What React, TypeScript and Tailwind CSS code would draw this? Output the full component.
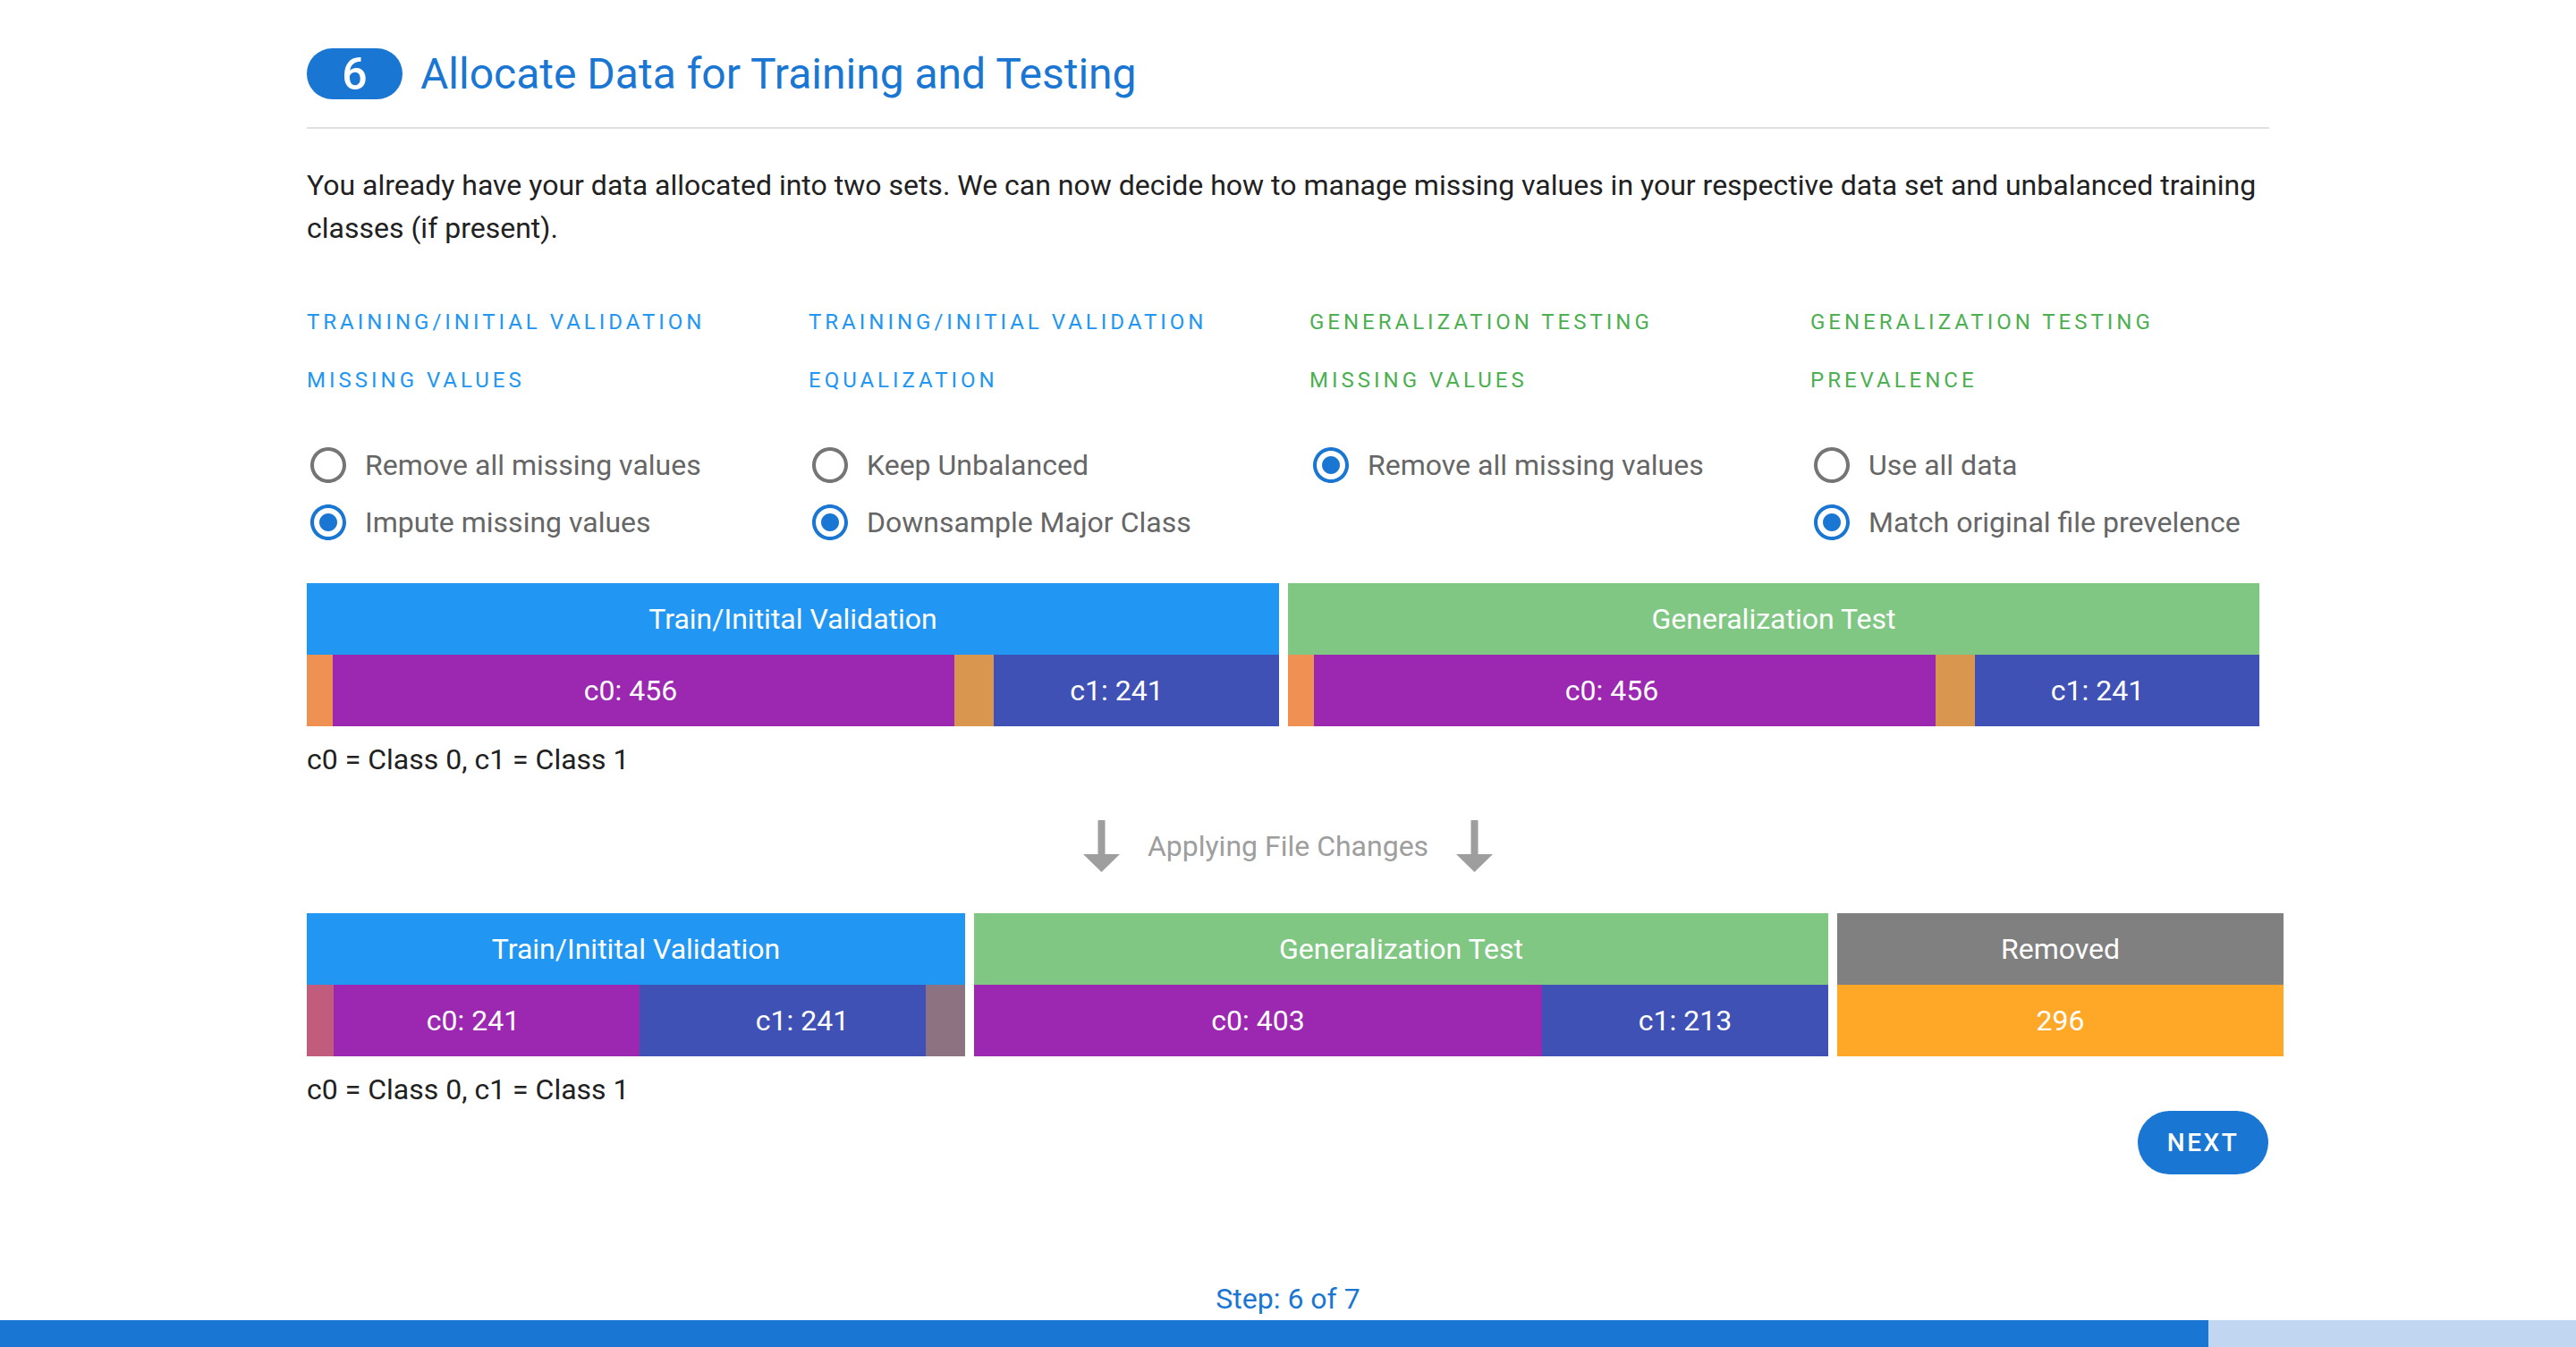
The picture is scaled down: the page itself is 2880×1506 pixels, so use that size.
import React from 'react';

type Part = { w: number; cls: string };
type Seg = { label: string; parts: Part[] };
type Block = { title: string; head: string; segs: Seg[] };

const before: Block[] = [
  {
    title: 'Train/Initital Validation',
    head: 'bg-[#2196f3]',
    segs: [
      { label: 'c0: 456', parts: [{ w: 29, cls: 'bg-[#ee9152]' }, { w: 695, cls: 'bg-[#9c27b0]' }] },
      { label: 'c1: 241', parts: [{ w: 44, cls: 'bg-[#d8964f]' }, { w: 319, cls: 'bg-[#3f51b5]' }] },
    ],
  },
  {
    title: 'Generalization Test',
    head: 'bg-[#81c784]',
    segs: [
      { label: 'c0: 456', parts: [{ w: 29, cls: 'bg-[#ee9152]' }, { w: 695, cls: 'bg-[#9c27b0]' }] },
      { label: 'c1: 241', parts: [{ w: 44, cls: 'bg-[#d8964f]' }, { w: 318, cls: 'bg-[#3f51b5]' }] },
    ],
  },
];

const after: Block[] = [
  {
    title: 'Train/Initital Validation',
    head: 'bg-[#2196f3]',
    segs: [
      { label: 'c0: 241', parts: [{ w: 30, cls: 'bg-[#c25c7c]' }, { w: 342, cls: 'bg-[#9c27b0]' }] },
      { label: 'c1: 241', parts: [{ w: 320, cls: 'bg-[#3f51b5]' }, { w: 44, cls: 'bg-[#8d7381]' }] },
    ],
  },
  {
    title: 'Generalization Test',
    head: 'bg-[#81c784]',
    segs: [
      { label: 'c0: 403', parts: [{ w: 635, cls: 'bg-[#9c27b0]' }] },
      { label: 'c1: 213', parts: [{ w: 320, cls: 'bg-[#3f51b5]' }] },
    ],
  },
  {
    title: 'Removed',
    head: 'bg-[#808080]',
    segs: [{ label: '296', parts: [{ w: 499, cls: 'bg-[#ffa726]' }] }],
  },
];

const columns = [
  {
    tone: 'text-[#2196f3]',
    lines: ['Training/Initial Validation', 'Missing Values'],
    options: [
      { label: 'Remove all missing values', checked: false },
      { label: 'Impute missing values', checked: true },
    ],
  },
  {
    tone: 'text-[#2196f3]',
    lines: ['Training/Initial Validation', 'Equalization'],
    options: [
      { label: 'Keep Unbalanced', checked: false },
      { label: 'Downsample Major Class', checked: true },
    ],
  },
  {
    tone: 'text-[#4caf50]',
    lines: ['Generalization Testing', 'Missing Values'],
    options: [{ label: 'Remove all missing values', checked: true }],
  },
  {
    tone: 'text-[#4caf50]',
    lines: ['Generalization Testing', 'Prevalence'],
    options: [
      { label: 'Use all data', checked: false },
      { label: 'Match original file prevelence', checked: true },
    ],
  },
];

function RadioIcon({ checked }: { checked: boolean }) {
  return (
    <svg
      viewBox="0 0 24 24"
      className={`w-[48px] h-[48px] shrink-0 ${checked ? 'text-[#1976d2]' : 'text-[#757575]'}`}
      fill="currentColor"
    >
      <path d="M12 2C6.48 2 2 6.48 2 12s4.48 10 10 10 10-4.48 10-10S17.52 2 12 2zm0 18c-4.42 0-8-3.58-8-8s3.58-8 8-8 8 3.58 8 8-3.58 8-8 8z" />
      {checked && <path d="M12 7c-2.76 0-5 2.24-5 5s2.24 5 5 5 5-2.24 5-5-2.24-5-5-5z" />}
    </svg>
  );
}

function ArrowDown() {
  return (
    <svg width="41" height="58" viewBox="0 0 41 58" className="text-[#9e9e9e]" fill="currentColor">
      <rect x="16.5" y="0" width="8" height="39" />
      <polygon points="0,38 41,38 20.5,58" />
    </svg>
  );
}

function Bars({ blocks }: { blocks: Block[] }) {
  return (
    <div className="flex gap-[10px]">
      {blocks.map((b, i) => {
        const width = b.segs.reduce((s, seg) => s + seg.parts.reduce((a, p) => a + p.w, 0), 0);
        return (
          <div key={i} className="flex flex-col" style={{ width }}>
            <div className={`h-[80px] flex items-center justify-center text-white text-[32px] ${b.head}`}>
              {b.title}
            </div>
            <div className="flex h-[80px]">
              {b.segs.map((seg, j) => (
                <div key={j} className="grid">
                  <div className="col-start-1 row-start-1 flex">
                    {seg.parts.map((p, k) => (
                      <div key={k} className={`h-[80px] ${p.cls}`} style={{ width: p.w }} />
                    ))}
                  </div>
                  <div className="col-start-1 row-start-1 flex items-center justify-center text-white text-[32px]">
                    {seg.label}
                  </div>
                </div>
              ))}
            </div>
          </div>
        );
      })}
    </div>
  );
}

export default function App() {
  return (
    <div className="h-[1506px] flex flex-col bg-white font-['Roboto',sans-serif] overflow-hidden">
      <main className="w-[2194px] mx-auto pt-[54px]">
        <div className="flex items-center gap-[20px] h-[57px]">
          <span className="h-[57px] w-[107px] rounded-full bg-[#1976d2] text-white flex items-center justify-center text-[50px] font-medium leading-none">
            6
          </span>
          <h1 className="text-[48px] leading-[57px] text-[#1976d2] font-normal">Allocate Data for Training and Testing</h1>
        </div>
        <div className="mt-[31px] h-[2px] bg-[#e0e0e0]" />

        <p className="mt-[39px] text-[32px] leading-[48px] text-[#212121]">
          You already have your data allocated into two sets. We can now decide how to manage missing values in your
          respective data set and unbalanced training classes (if present).
        </p>

        <div className="mt-[49px] grid grid-cols-[561px_560px_560px_513px]">
          {columns.map((col, i) => (
            <div key={i}>
              {col.lines.map((l, j) => (
                <div key={j} className={`text-[24px] leading-[65px] tracking-[4px] uppercase ${col.tone}`}>
                  {l}
                </div>
              ))}
              <div className="mt-[30px]">
                {col.options.map((o, j) => (
                  <div key={j} className="h-[64px] flex items-center">
                    <RadioIcon checked={o.checked} />
                    <span className="ml-[17px] text-[32px] text-[#666666]">{o.label}</span>
                  </div>
                ))}
              </div>
            </div>
          ))}
        </div>

        <div className="mt-[36px]">
          <Bars blocks={before} />
        </div>
        <div className="mt-[13px] text-[32px] leading-[48px] text-[#212121]">c0 = Class 0, c1 = Class 1</div>

        <div className="mt-[44px] h-[58px] flex items-center justify-center gap-[31px]">
          <ArrowDown />
          <span className="text-[32px] text-[#9e9e9e]">Applying File Changes</span>
          <ArrowDown />
        </div>

        <div className="mt-[46px]">
          <Bars blocks={after} />
        </div>
        <div className="mt-[13px] text-[32px] leading-[48px] text-[#212121]">c0 = Class 0, c1 = Class 1</div>

        <div className="flex justify-end">
          <button className="h-[71px] w-[146px] mr-[1px] rounded-full bg-[#1976d2] text-white text-[28px] font-medium tracking-[2.5px]">
            NEXT
          </button>
        </div>
      </main>

      <footer className="mt-auto">
        <div className="text-center text-[32px] leading-[48px] text-[#1976d2]">Step: 6 of 7</div>
        <div className="h-[30px] bg-[#c0d6f1]">
          <div className="h-full w-[85.714%] bg-[#1976d2]" />
        </div>
      </footer>
    </div>
  );
}
